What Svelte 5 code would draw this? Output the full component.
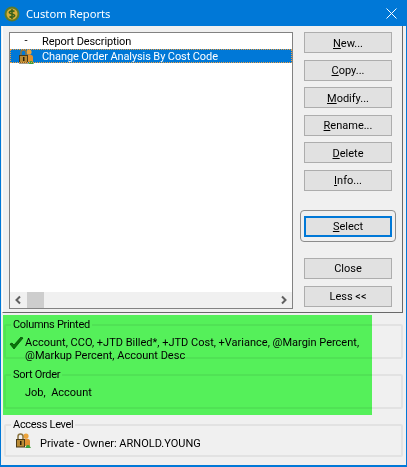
<script>
  const buttons = [
    { key: 'N', rest: 'ew...' },
    { key: 'C', rest: 'opy...' },
    { key: 'M', rest: 'odify...' },
    { key: 'R', rest: 'ename...' },
    { key: 'D', rest: 'elete' },
    { key: 'I', rest: 'nfo...' }
  ];
</script>

{#snippet lockIcon()}
  <svg class="lock" width="16" height="15" viewBox="0 0 16 15">
    <circle cx="11" cy="3" r="2.600" fill="#eda33a" />
    <path d="M7 13V8q0-2.500 4-2.500T15 8v5z" fill="#e09030" />
    <path d="M3 6V3.500Q3 1 5.500 1T8 3.500V6" fill="none" stroke="#8a7440" stroke-width="1.500" />
    <rect x="1.500" y="6.500" width="8" height="7.500" fill="#b98a35" stroke="#4a3a18" />
    <rect x="5" y="8" width="1.500" height="4" fill="#2c2008" />
    <path d="M10 15l2-3h2l2 3z" fill="#3ca03c" />
  </svg>
{/snippet}

<div class="window">
  <header class="titlebar">
    <svg class="appicon" width="16" height="16" viewBox="0 0 16 16">
      <circle cx="8" cy="8" r="7.500" fill="#5c7a2c" />
      <circle cx="8" cy="8" r="5.500" fill="#d8ae3a" />
      <path d="M10.500 5.500Q8 4 6 5.500T8 8t2 2.500T5.500 10.500M8 3v10" fill="none" stroke="#35601c" stroke-width="1.500" />
    </svg>
    <span class="title">Custom Reports</span>
    <svg class="close" width="11" height="11" viewBox="0 0 11 11">
      <path d="M.5.500l10 10M10.500.500l-10 10" stroke="#fff" stroke-width="1" fill="none" />
    </svg>
  </header>

  <div class="body">
    <div class="top">
      <div class="list">
        <div class="rows">
          <div class="row">
            <span class="mark">-</span>
            <span class="label">Report Description</span>
          </div>
          <div class="row selected">
            <span class="mark">{@render lockIcon()}</span>
            <span class="label">Change Order Analysis By Cost Code</span>
          </div>
        </div>
        <div class="scrollbar">
          <svg width="17" height="16" viewBox="0 0 17 16">
            <path d="M10 4.500L6.500 8l3.500 3.500" fill="none" stroke="#606060" stroke-width="2" />
          </svg>
          <div class="thumb"></div>
          <div class="track"></div>
          <svg width="17" height="16" viewBox="0 0 17 16">
            <path d="M7 4.500L10.500 8 7 11.500" fill="none" stroke="#606060" stroke-width="2" />
          </svg>
        </div>
      </div>

      <div class="actions">
        {#each buttons as b}
          <button class="btn"><u>{b.key}</u>{b.rest}</button>
        {/each}
        <div class="default-frame">
          <button class="btn focused"><u>S</u>elect</button>
        </div>
        <button class="btn close-btn">Close</button>
        <button class="btn">Less &lt;&lt;</button>
      </div>
    </div>

    <div class="details">
      <fieldset class="columns">
        <legend>Columns Printed</legend>
        <svg class="check" width="15" height="13" viewBox="0 0 15 13">
          <path d="M1 7l4 5 9-11-2-1-7 8-2-2z" fill="#0c7a10" stroke="#0a3a0a" stroke-width=".7" />
        </svg>
        <p>Account, CCO, +JTD Billed*, +JTD Cost, +Variance, @Margin Percent,<br />@Markup Percent, Account Desc</p>
      </fieldset>
      <fieldset class="sort">
        <legend>Sort Order</legend>
        <p>Job,&nbsp; Account</p>
      </fieldset>
      <fieldset class="access">
        <legend>Access Level</legend>
        {@render lockIcon()}
        <p>Private - Owner: ARNOLD.YOUNG</p>
      </fieldset>
      <div class="highlight"></div>
    </div>
  </div>
</div>

<style>
  :global(body) {
    margin: 0;
  }
  .window {
    width: 407px;
    height: 467px;
    box-sizing: border-box;
    display: flex;
    flex-direction: column;
    background: #f0f0f0;
    border: 1px solid #0078d7;
    border-bottom-width: 2px;
    font: 11px/14px Roboto, "Liberation Sans", sans-serif;
    color: #000;
    overflow: hidden;
  }
  .titlebar {
    height: 25px;
    flex: none;
    display: flex;
    align-items: center;
    padding: 0 9px 0 3px;
    background: #0078d7;
    color: #fff;
  }
  .appicon {
    margin-right: 6px;
  }
  .title {
    flex: 1;
    font: 11.200px "Noto Sans", sans-serif;
  }
  .body {
    flex: 1;
    position: relative;
    display: flex;
    flex-direction: column;
    padding: 0 3px 0 1px;
  }
  .top {
    height: 287px;
    flex: none;
    box-sizing: border-box;
    display: flex;
    padding: 6px 0 0 6px;
    border-right: 1px solid #696969;
    border-bottom: 1px solid #696969;
    border-left: 1px solid #fff;
  }
  .list {
    width: 284px;
    height: 277px;
    box-sizing: border-box;
    display: flex;
    flex-direction: column;
    background: #fff;
    border: 1px solid #828282;
    letter-spacing: -0.1px;
  }
  .rows {
    flex: 1;
  }
  .row {
    height: 14px;
    margin-top: 1px;
    display: flex;
    align-items: center;
  }
  .label {
    padding-top: 2px;
  }
  .mark {
    width: 32px;
    flex: none;
    display: flex;
    justify-content: center;
  }
  .selected {
    background: #0078d7;
    color: #fff;
    outline: 1px dotted #f0a040;
    outline-offset: -1px;
  }
  .lock {
    flex: none;
  }
  .scrollbar {
    height: 16px;
    display: flex;
    background: #f0f0f0;
  }
  .thumb {
    width: 17px;
    background: #cdcdcd;
  }
  .track {
    flex: 1;
  }
  .actions {
    width: 88px;
    margin-left: 11px;
    display: flex;
    flex-direction: column;
    gap: 6.600px;
  }
  .btn {
    width: 88px;
    height: 21px;
    flex: none;
    box-sizing: border-box;
    padding: 2px 0 0;
    background: #e1e1e1;
    border: 1px solid #adadad;
    font: inherit;
    color: #000;
  }
  .default-frame {
    margin: 12.400px -4px 9.400px;
    padding: 5px 3px 4px;
    border: 1px solid #8c8c8c;
    border-radius: 4px;
  }
  .focused {
    display: block;
    border: 2px solid #0078d7;
  }
  .details {
    flex: 1;
    padding: 5px 0 0 2px;
    display: flex;
    flex-direction: column;
    gap: 9px;
  }
  fieldset {
    position: relative;
    height: 41px;
    box-sizing: border-box;
    margin: 0;
    padding: 0;
    border: 2px solid #e2e2e2;
    border-radius: 2px;
  }
  legend {
    margin-left: 5px;
    padding: 0 2px;
    letter-spacing: -0.3px;
  }
  p {
    margin: 0;
  }
  .columns p {
    padding: 4px 0 0 19px;
    line-height: 13px;
  }
  .check {
    position: absolute;
    left: 3px;
    top: 5px;
  }
  .sort p {
    padding: 4px 0 0 19px;
  }
  .access {
    height: 39px;
    display: flex;
  }
  .access .lock {
    margin: 1px 0 0 9px;
  }
  .access p {
    padding: 5px 0 0 9px;
  }
  .highlight {
    position: absolute;
    left: 2px;
    top: 289px;
    width: 369px;
    height: 100px;
    background: #5aff60;
    mix-blend-mode: multiply;
  }
</style>
